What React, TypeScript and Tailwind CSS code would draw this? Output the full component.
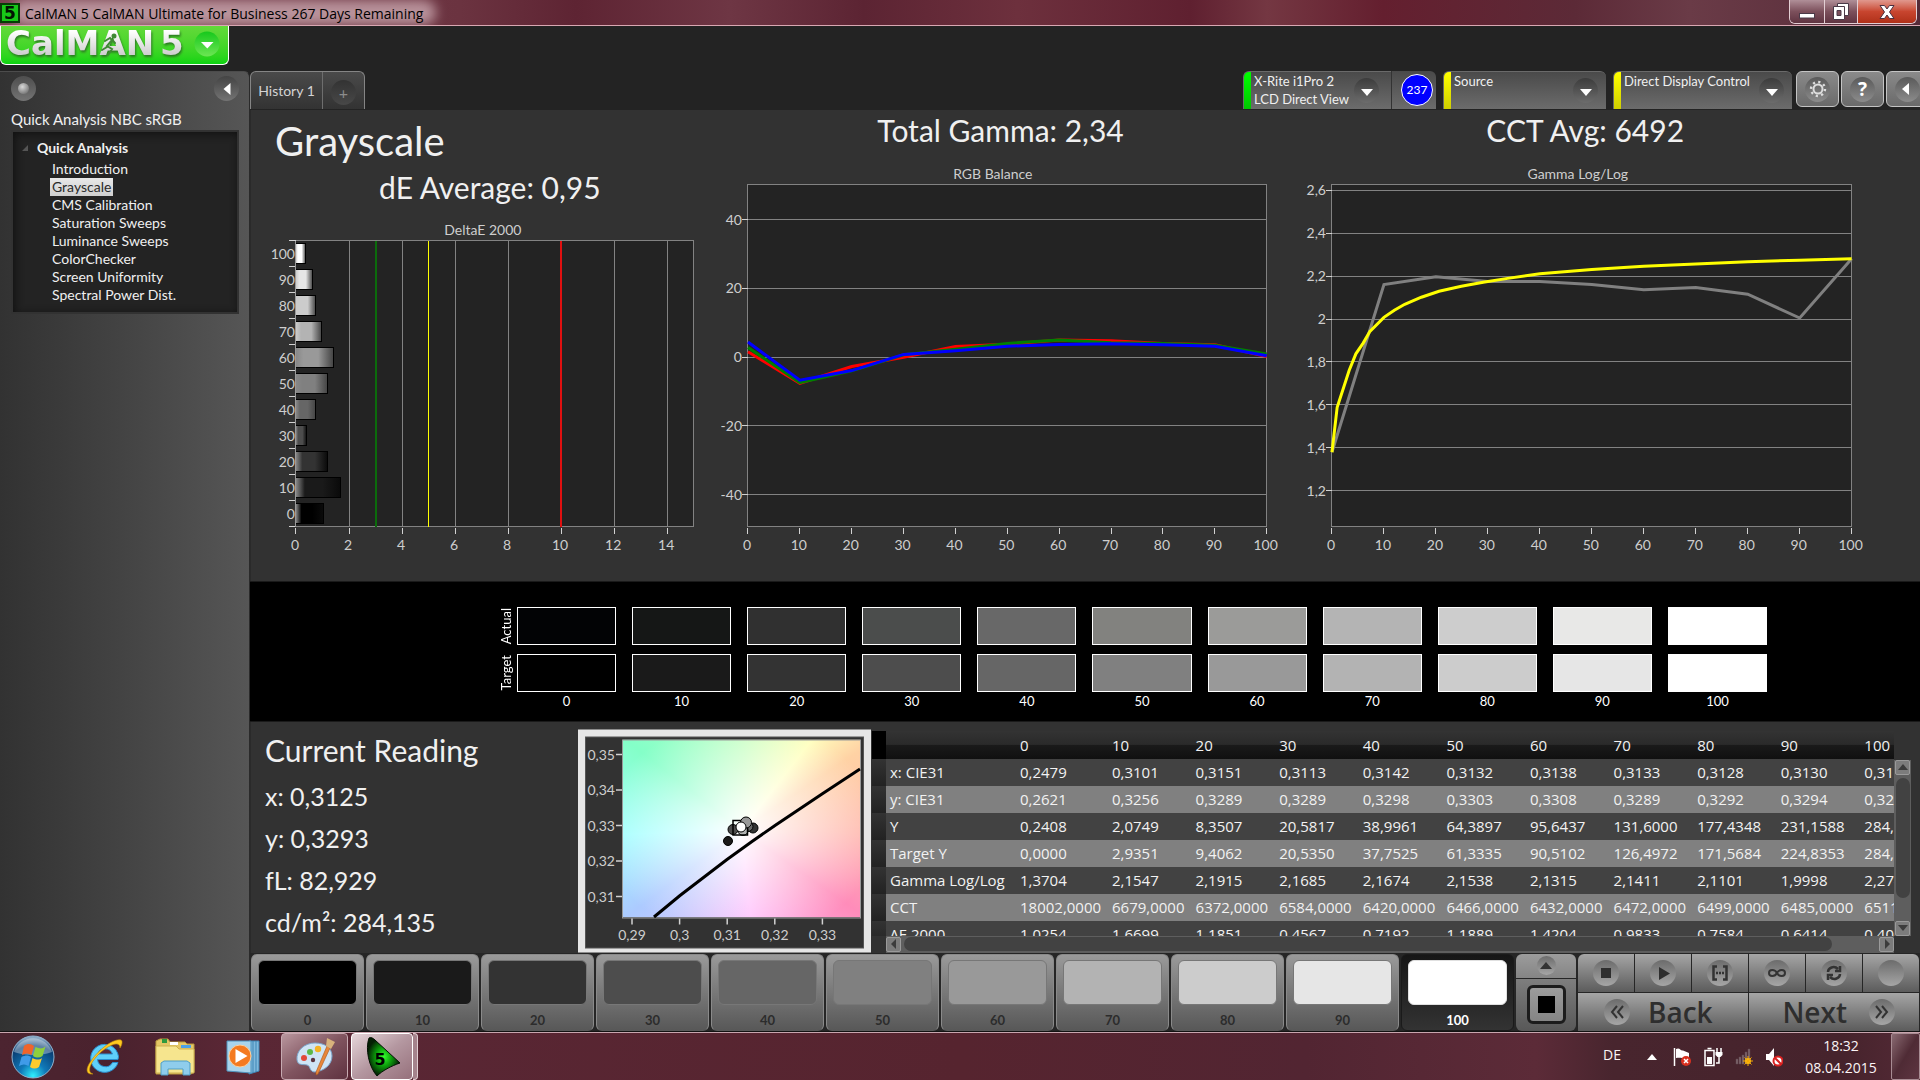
import React from 'react';
import clsx from 'clsx';

const LEVELS = [0, 10, 20, 30, 40, 50, 60, 70, 80, 90, 100];

const MENU = [
  'Introduction',
  'Grayscale',
  'CMS Calibration',
  'Saturation Sweeps',
  'Luminance Sweeps',
  'ColorChecker',
  'Screen Uniformity',
  'Spectral Power Dist.',
];

const TARGET = [
  '#000000',
  '#1a1a1a',
  '#333333',
  '#4d4d4d',
  '#666666',
  '#808080',
  '#999999',
  '#b3b3b3',
  '#cccccc',
  '#e6e6e6',
  '#ffffff',
];

const ACTUAL = [
  '#020305',
  '#151716',
  '#303030',
  '#4b4d4c',
  '#686868',
  '#82827f',
  '#9b9b99',
  '#b4b4b4',
  '#cdcdcd',
  '#e8e8e7',
  '#ffffff',
];

const DELTA_E = [
  1.0254, 1.6699, 1.1851, 0.4067, 0.7392, 1.1889, 1.4004, 0.9633, 0.7384,
  0.6214, 0.36,
];

const RGB_BALANCE = [
  { color: '#ff0000', values: [1.6, -7.6, -2.7, 0, 3.1, 3.8, 5, 4.8, 4, 3.6, 0.2] },
  { color: '#008000', values: [2.8, -7.4, -4, 0.7, 2.3, 4, 5, 4.2, 4, 3.5, 0.9] },
  { color: '#0000ff', values: [4.4, -6.7, -3.9, 0.8, 1.9, 3.2, 3.7, 3.9, 3.6, 3.2, 0.4] },
];

const GAMMA = [1.38, 2.161, 2.198, 2.175, 2.175, 2.161, 2.137, 2.147, 2.116, 2.005, 2.281];

const GAMMA_TARGET = [
  [0, 1.379],
  [1, 1.589],
  [3.3, 1.76],
  [4.6, 1.838],
  [6, 1.888],
  [7.3, 1.943],
  [10, 2.008],
  [12, 2.041],
  [14, 2.069],
  [17.2, 2.102],
  [20.6, 2.13],
  [24.9, 2.153],
  [29.1, 2.172],
  [33.8, 2.19],
  [40, 2.211],
  [50, 2.231],
  [60, 2.246],
  [70, 2.257],
  [80, 2.267],
  [90, 2.275],
  [100, 2.281],
];

const TABLE = [
  { label: 'x: CIE31', cells: ['0,2479', '0,3101', '0,3151', '0,3113', '0,3142', '0,3132', '0,3138', '0,3133', '0,3128', '0,3130', '0,3125'] },
  { label: 'y: CIE31', cells: ['0,2621', '0,3256', '0,3289', '0,3289', '0,3298', '0,3303', '0,3308', '0,3289', '0,3292', '0,3294', '0,3293'] },
  { label: 'Y', cells: ['0,2408', '2,0749', '8,3507', '20,5817', '38,9961', '64,3897', '95,6437', '131,6000', '177,4348', '231,1588', '284,1350'] },
  { label: 'Target Y', cells: ['0,0000', '2,9351', '9,4062', '20,5350', '37,7525', '61,3335', '90,5102', '126,4972', '171,5684', '224,8353', '284,1350'] },
  { label: 'Gamma Log/Log', cells: ['1,3704', '2,1547', '2,1915', '2,1685', '2,1674', '2,1538', '2,1315', '2,1411', '2,1101', '1,9998', '2,2740'] },
  { label: 'CCT', cells: ['18002,0000', '6679,0000', '6372,0000', '6584,0000', '6420,0000', '6466,0000', '6432,0000', '6472,0000', '6499,0000', '6485,0000', '6511,0000'] },
  { label: 'ΔE 2000', cells: ['1,0254', '1,6699', '1,1851', '0,4567', '0,7192', '1,1889', '1,4204', '0,9833', '0,7584', '0,6414', '0,4000'] },
];

/* ---------- window chrome ---------- */

const TitleBar = () => (
  <header className="relative flex h-[26px] items-start overflow-hidden border-b border-[#d9a7b2] bg-[linear-gradient(90deg,#7a4350_0%,#6b3340_24%,#5e2433_30%,#6e3644_38%,#5c2433_45%,#6d303d_53%,#5f2030_62%,#743742_66%,#641f2f_72%,#5c2a37_82%,#6a3b47_88%,#542a37_100%)]">
    <div className="absolute inset-y-0 left-3 w-[424px] rounded-full bg-[#d8b9c0]/70 blur-[6px]" />
    <svg className="relative mt-[3px] h-5 w-5 shrink-0" viewBox="0 0 20 20">
      <rect width="20" height="20" fill="#063d06" />
      <rect x="2" y="2" width="16" height="16" fill="#18c818" />
      <text x="10" y="16" textAnchor="middle" fontSize="17" fontWeight="bold" fill="#021402" fontFamily="DejaVu Sans, sans-serif">
        5
      </text>
    </svg>
    <h1 className="relative ml-[5px] flex-1 font-['Open_Sans',sans-serif] text-[14px] leading-[27px] text-black">
      CalMAN 5 CalMAN Ultimate for Business 267 Days Remaining
    </h1>
    <div className="relative mr-[3px] flex h-6 overflow-hidden rounded-b-md border border-t-0 border-[#e3cfd4]">
      <button
        aria-label="Minimize"
        className="flex w-[35px] items-center justify-center border-r border-[#e3cfd4] bg-linear-to-b from-[#b08f98] via-[#7c505c] to-[#5f3441]"
      >
        <svg className="h-5 w-5" viewBox="0 0 20 20">
          <rect x="2.500" y="11.500" width="15" height="4.500" fill="#fff" stroke="#4a3a48" />
        </svg>
      </button>
      <button
        aria-label="Restore"
        className="flex w-[33px] items-center justify-center border-r border-[#e3cfd4] bg-linear-to-b from-[#b08f98] via-[#7c505c] to-[#5f3441]"
      >
        <svg className="h-5 w-5" viewBox="0 0 20 20" fill="#fff" stroke="#4a3a48">
          <path d="M6.500 1.500h11v12h-11z" />
          <path d="M2.500 4.500h11v13h-11z" />
          <path d="M6 8.500h4v5H6z" fill="#7c505c" />
        </svg>
      </button>
      <button
        aria-label="Close"
        className="flex w-[58px] items-center justify-center bg-linear-to-b from-[#e0988e] via-[#c8452f] to-[#b03018]"
      >
        <svg className="h-5 w-5" viewBox="0 0 20 20">
          <path d="M3 3.500h4.500l2.500 3.500 2.500-3.500H17L12.500 10l4.500 6.500h-4.500L10 13l-2.500 3.500H3L7.500 10z" fill="#fff" stroke="#4a3040" />
        </svg>
      </button>
    </div>
  </header>
);

const Logo = () => (
  <button
    aria-label="CalMAN menu"
    className="block h-[39px] w-[229px] rounded-b-md border border-t-0 border-white bg-linear-to-b from-[#63d93a] to-[#0ad412]"
  >
    <svg className="h-[38px] w-[227px] overflow-visible" viewBox="1 0 227 38">
      <defs>
        <linearGradient id="silver" x1="0" y1="0" x2="0" y2="1">
          <stop offset="0.2" stopColor="#ffffff" />
          <stop offset="1" stopColor="#bdbdbd" />
        </linearGradient>
        <linearGradient id="knob" x1="0" y1="0" x2="0" y2="1">
          <stop offset="0" stopColor="#16c81c" />
          <stop offset="1" stopColor="#6ce653" />
        </linearGradient>
      </defs>
      <g fontFamily="DejaVu Sans, sans-serif" fontWeight="bold" fontSize="34" className="drop-shadow-[1px_2px_1px_#2c7a22]">
        <text x="6" y="29" fill="url(#silver)">CalMAN</text>
        <text x="160" y="29" fill="url(#silver)">5</text>
      </g>
      <g stroke="#3f8a34" fill="none" strokeWidth="2" strokeLinecap="round">
        <path d="M112 14l-5 6 5 3-4 6M105 15l5-3 5 5M107 21l-5 3" />
        <circle cx="114" cy="10" r="1.500" fill="#3f8a34" />
      </g>
      <circle cx="207" cy="18" r="12.500" fill="url(#knob)" />
      <path d="M201 16h12.500l-6.200 6.500z" fill="#fff" />
    </svg>
  </button>
);

/* ---------- sidebar ---------- */

const Sidebar = () => (
  <aside className="w-[250px] shrink-0 rounded-tr-md border-t border-r border-t-[#4c4c4c] border-r-[#2a2a2a] bg-linear-to-r from-[#323232] to-[#565656] pr-[10px] pl-[11px]">
    <div className="flex items-center justify-between pt-1">
      <button aria-label="Record" className="h-[25px] w-[25px] rounded-full bg-linear-to-b from-[#4e4e4e] to-[#747474] p-[7px]">
        <span className="block h-[11px] w-[11px] rounded-full bg-[radial-gradient(circle_at_40%_35%,#d8d8d8,#7a7a7a_75%)]" />
      </button>
      <button aria-label="Collapse" className="flex h-[25px] w-[25px] items-center justify-center rounded-full bg-linear-to-b from-[#444] to-[#747474]">
        <svg className="h-3 w-2" viewBox="0 0 8 12">
          <path d="M7.500 0v12L.5 6z" fill="#fff" />
        </svg>
      </button>
    </div>
    <h2 className="mt-2 mb-px text-[15px] leading-[20px] text-[#f0f0f0]">Quick Analysis NBC sRGB</h2>
    <nav className="h-[184px] border-2 border-[#323232] bg-[#232323] pt-[6px] shadow-[inset_2px_2px_8px_#111]">
      <p className="flex items-center gap-2 pl-2 text-[14px] leading-[20px] font-bold text-[#f0f0f0]">
        <svg className="h-2 w-2" viewBox="0 0 8 8">
          <path d="M7 1v6H1z" fill="#555" />
        </svg>
        Quick Analysis
      </p>
      <ul className="pt-[2px] pl-[37px]">
        {MENU.map((item) => (
          <li key={item} className="flex">
            <a
              href="#"
              className={clsx(
                'px-[2px] text-[14px] leading-[18px]',
                item === 'Grayscale' ? 'bg-linear-to-b from-[#e8e8e8] to-[#cfcfcf] text-[#2a2a2a]' : 'text-[#f0f0f0]'
              )}
            >
              {item}
            </a>
          </li>
        ))}
      </ul>
    </nav>
  </aside>
);

/* ---------- top toolbar ---------- */

const DropKnob = () => (
  <span className="mt-[6px] flex h-[25px] w-[25px] shrink-0 items-center justify-center rounded-full bg-linear-to-b from-[#3c3c3c] to-[#6c6c6c]">
    <svg className="mt-1 h-[7px] w-3" viewBox="0 0 12 7">
      <path d="M0 0h12L6 7z" fill="#fff" />
    </svg>
  </span>
);

interface DeviceProps {
  label: string;
  sub?: string;
  bar: string;
  className: string;
}

const Device: React.FC<DeviceProps> = ({ label, sub, bar, className }) => (
  <button
    className={clsx(
      'flex h-[38px] items-start overflow-hidden rounded-t-md border-t border-l border-[#6a6a6a] bg-linear-to-b from-[#4a4a4a] to-[#6c6c6c] text-left',
      className
    )}
  >
    <span className={clsx('mr-[3px] w-[7px] self-stretch bg-linear-to-b', bar)} />
    <span className="flex-1 text-[13px] leading-[18px] whitespace-nowrap text-[#f0f0f0]">
      {label}
      {sub && (
        <>
          <br />
          {sub}
        </>
      )}
    </span>
    <DropKnob />
  </button>
);

const ToolButton = ({ label, children }: { label: string; children: React.ReactNode }) => (
  <button
    aria-label={label}
    className="flex h-[36px] w-[43px] shrink-0 items-center justify-center rounded-md border border-[#c4c4c4] bg-linear-to-b from-[#8a8a8a] to-[#6a6a6a]"
  >
    <span className="flex h-[25px] w-[25px] items-center justify-center rounded-full bg-linear-to-b from-[#5a5a5a] to-[#8c8c8c]">
      {children}
    </span>
  </button>
);

const Toolbar = () => (
  <div className="flex h-[39px] items-start justify-between overflow-hidden bg-[#232323]">
    <div className="flex h-[38px] rounded-t-md border border-b-0 border-[#858585] bg-linear-to-b from-[#4a4a4a] to-[#333]">
      <button className="w-[72px] border-r border-[#6e6e6e] text-[14px] text-[#d4d4d4]">History 1</button>
      <button aria-label="Add history" className="flex w-[41px] items-center justify-center">
        <span className="mt-[3px] h-[25px] w-[25px] rounded-full bg-linear-to-b from-[#333] to-[#484848] text-[16px] leading-[25px] text-[#8c8c8c]">
          +
        </span>
      </button>
    </div>
    <div className="-mr-[9px] flex">
      <Device label="X-Rite i1Pro 2" sub="LCD Direct View" bar="from-[#00ff00] to-[#00c800]" className="w-[148px] rounded-tr-none pr-3" />
      <div className="flex h-[38px] w-[45px] items-center justify-end rounded-tr-md border-l border-[#333] bg-linear-to-b from-[#4a4a4a] to-[#6c6c6c] pr-[3px]">
        <span className="flex h-8 w-8 items-center justify-center rounded-full border border-white bg-[#0000ff] text-[12px] text-white">
          237
        </span>
      </div>
      <Device label="Source" bar="from-[#ffff00] to-[#d0d000]" className="ml-[7px] w-[163px] pr-2" />
      <Device label="Direct Display Control" bar="from-[#ffff00] to-[#d0d000]" className="mr-1 ml-[7px] w-[179px] pr-2" />
      <div className="flex gap-[2px]">
        <ToolButton label="Settings">
          <svg className="h-[18px] w-[18px]" viewBox="0 0 18 18" fill="none" stroke="#ddd">
            <circle cx="9" cy="9" r="4.500" strokeWidth="2" />
            <circle cx="9" cy="9" r="7" strokeWidth="2.400" strokeDasharray="2.200 3.298" />
          </svg>
        </ToolButton>
        <ToolButton label="Help">
          <span className="font-['Open_Sans',sans-serif] text-[19px] leading-[25px] font-bold text-white">?</span>
        </ToolButton>
        <ToolButton label="Collapse toolbar">
          <svg className="mr-[5px] h-3 w-[7px]" viewBox="0 0 7 12">
            <path d="M7 0v12L0 6z" fill="#fff" />
          </svg>
        </ToolButton>
      </div>
    </div>
  </div>
);

/* ---------- charts ---------- */

const GRID = '#828282';
const TICK = '#d2d2d2';

const ChartText = ({ x, y, anchor = 'middle', children }: { x: number; y: number; anchor?: 'middle' | 'end'; children: React.ReactNode }) => (
  <text x={x} y={y} textAnchor={anchor} fontSize="14" fill="#cecece">
    {children}
  </text>
);

const DeltaEChart = () => {
  const left = 45;
  const top = 35;
  const width = 398;
  const height = 286;
  const step = height / LEVELS.length;
  const px = (v: number) => left + (v / 15) * width;

  return (
    <svg className="block w-full" viewBox="0 0 470 375">
      <defs>
        {TARGET.map((c, i) => (
          <linearGradient key={i} id={`bar${i}`}>
            <stop offset="0" stopColor={i > 6 ? '#ccc' : '#888'} />
            <stop offset="0.2" stopColor={c} />
            <stop offset="0.6" stopColor={c} />
            <stop offset="1" stopColor={i > 3 ? '#444' : '#0a0a0a'} />
          </linearGradient>
        ))}
      </defs>
      <ChartText x={232} y={29}>DeltaE 2000</ChartText>
      <g shapeRendering="crispEdges">
        <rect x={left} y={top} width={width} height={height} fill="#232323" stroke={GRID} />
        {[2, 4, 6, 8, 10, 12, 14].map((v) => (
          <path key={v} d={`M${px(v)} ${top}v${height}`} stroke={GRID} />
        ))}
        {[0, 2, 4, 6, 8, 10, 12, 14].map((v) => (
          <path key={v} d={`M${px(v)} ${top + height + 1}v6`} stroke={TICK} />
        ))}
        <path d={`M${px(3)} ${top}v${height}`} stroke="#0b6b0b" strokeWidth="2" />
        <path d={`M${px(5)} ${top}v${height}`} stroke="#ffff00" />
        <path d={`M${px(10)} ${top}v${height}`} stroke="#e01010" strokeWidth="2" />
        {[...LEVELS, 110].map((_, i) => (
          <path key={i} d={`M${left - 7} ${top + i * step}h7`} stroke={TICK} />
        ))}
        {DELTA_E.map((v, i) => (
          <rect
            key={i}
            x={left}
            y={top + (10 - i) * step + 3}
            width={px(v) - left}
            height={20}
            fill={`url(#bar${i})`}
            stroke="#000"
          />
        ))}
        <path d={`M${left} ${top}v${height}`} stroke="#9a9a9a" />
      </g>
      {LEVELS.map((level, i) => (
        <ChartText key={level} x={left - 1} y={top + (10 - i) * step + 18} anchor="end">{level}</ChartText>
      ))}
      {[0, 2, 4, 6, 8, 10, 12, 14].map((v) => (
        <ChartText key={v} x={px(v) - 1} y={344}>{v}</ChartText>
      ))}
    </svg>
  );
};

interface LineChartProps {
  title: string;
  titleX: number;
  viewWidth: number;
  left: number;
  width: number;
  ticks: number[];
  y: (v: number) => number;
  children: React.ReactNode;
}

const LineChart: React.FC<LineChartProps> = ({ title, titleX, viewWidth, left, width, ticks, y, children }) => {
  const top = 37;
  const height = 342;

  return (
    <svg className="block w-full" viewBox={`0 0 ${viewWidth} 433`}>
      <ChartText x={titleX} y={31}>{title}</ChartText>
      <g shapeRendering="crispEdges">
        <rect x={left} y={top} width={width} height={height} fill="#232323" stroke={GRID} />
        {ticks.map((v) => (
          <g key={v}>
            <path d={`M${left} ${y(v)}h${width}`} stroke={GRID} />
            <path d={`M${left - 6} ${y(v)}h6`} stroke={TICK} />
          </g>
        ))}
        {LEVELS.map((v) => (
          <path key={v} d={`M${left + (v / 100) * width} ${top + height + 1}v6`} stroke={TICK} />
        ))}
      </g>
      {ticks.map((v) => (
        <ChartText key={v} x={left - 6} y={y(v) + 5} anchor="end">{String(v).replace('.', ',')}</ChartText>
      ))}
      {LEVELS.map((v) => (
        <ChartText key={v} x={left + (v / 100) * width - 1} y={402}>{v}</ChartText>
      ))}
      {children}
    </svg>
  );
};

const RgbBalanceChart = () => {
  const y = (v: number) => 209.300 - v * 3.437;
  return (
    <LineChart title="RGB Balance" titleX={272} viewWidth={570} left={27} width={519} ticks={[40, 20, 0, -20, -40]} y={y}>
      {RGB_BALANCE.map((s) => (
        <polyline
          key={s.color}
          fill="none"
          stroke={s.color}
          strokeWidth="3"
          points={s.values.map((v, i) => `${27 + i * 51.9},${y(v)}`).join(' ')}
        />
      ))}
    </LineChart>
  );
};

const GammaChart = () => {
  const y = (v: number) => 42.5 + (2.6 - v) * 214.5;
  return (
    <LineChart
      title="Gamma Log/Log"
      titleX={288}
      viewWidth={630}
      left={42}
      width={520}
      ticks={[2.6, 2.4, 2.2, 2, 1.8, 1.6, 1.4, 1.2]}
      y={y}
    >
      <polyline fill="none" stroke="#808080" strokeWidth="3" points={GAMMA.map((v, i) => `${42 + i * 52},${y(v)}`).join(' ')} />
      <polyline fill="none" stroke="#ffff00" strokeWidth="3" points={GAMMA_TARGET.map(([l, v]) => `${42 + l * 5.2},${y(v)}`).join(' ')} />
    </LineChart>
  );
};

const Charts = () => (
  <section className="grid grid-cols-[470fr_570fr_630fr] border-l border-[#2a2a2a] bg-[#323232] text-[#f0f0f0]">
    <div className="pt-[9px]">
      <h2 className="pl-[24px] text-[40px] leading-[44px]">Grayscale</h2>
      <p className="mt-[6px] mb-px pl-2 text-center text-[30px] leading-[36px]">dE Average: 0,95</p>
      <DeltaEChart />
    </div>
    <div className="pt-[2px]">
      <p className="pr-[10px] text-center text-[30px] leading-[36px]">Total Gamma: 2,34</p>
      <RgbBalanceChart />
    </div>
    <div className="pt-[2px]">
      <p className="pr-[40px] text-center text-[30px] leading-[36px]">CCT Avg: 6492</p>
      <GammaChart />
    </div>
  </section>
);

/* ---------- swatches ---------- */

const SwatchRow = ({ label, colors }: { label: string; colors: string[] }) => (
  <div className="flex h-[38px]">
    <div className="flex w-[18px] items-center justify-start">
      <span className="rotate-180 text-[13px] leading-[14px] text-white [writing-mode:vertical-rl]">{label}</span>
    </div>
    <div className="grid flex-1 grid-cols-11 gap-4">
      {colors.map((c, i) => (
        <div key={i} className="border border-white" style={{ backgroundColor: c }} />
      ))}
    </div>
  </div>
);

const Swatches = () => (
  <section className="flex h-[141px] flex-col border-t border-b border-[#1a1a1a] bg-black pt-[25px] pr-[153px] pl-[249px]">
    <SwatchRow label="Actual" colors={ACTUAL} />
    <div className="h-[9px]" />
    <SwatchRow label="Target" colors={TARGET} />
    <div className="grid grid-cols-11 gap-4 pl-[18px] text-center text-[13px] leading-[18px] text-white">
      {LEVELS.map((l) => (
        <span key={l}>{l}</span>
      ))}
    </div>
  </section>
);

/* ---------- readings, CIE plot and table ---------- */

const CieChart = () => (
  <svg className="block w-[293px] shrink-0" viewBox="0 0 293 223">
    <rect width="293" height="223" fill="#e6e6e6" />
    <rect x="7.500" y="7.500" width="278" height="211" fill="#323232" stroke="#555" />
    <foreignObject x="45" y="10" width="237" height="178">
      <div className="h-full w-full bg-[radial-gradient(ellipse_140px_110px_at_50%_51%,#ffffff_0%,#ffffffcc_20%,#ffffff66_60%,#ffffff00_100%),conic-gradient(from_0deg_at_50%_51%,#c6ffc4_0deg,#ffffbe_38deg,#ffd2a4_56deg,#ffb8ac_90deg,#ff8cba_125deg,#ffbefc_174deg,#accaff_233deg,#a0ffff_268deg,#84ffc8_308deg,#c6ffc4_360deg)]" />
    </foreignObject>
    <rect x="44.500" y="10.500" width="238" height="178" fill="none" stroke="#999" />
    {[0.35, 0.34, 0.33, 0.32, 0.31].map((v, i) => (
      <g key={v}>
        <path d={`M38 ${25 + i * 35.5}h6`} stroke={TICK} strokeWidth="1.500" />
        <ChartText x={37} y={30 + i * 35.5} anchor="end">{String(v).replace('.', ',')}</ChartText>
      </g>
    ))}
    {[0.29, 0.3, 0.31, 0.32, 0.33].map((v, i) => (
      <g key={v}>
        <path d={`M${54 + i * 47.6} 189v6`} stroke={TICK} strokeWidth="1.500" />
        <ChartText x={54 + i * 47.6} y={210}>{String(v).replace('.', ',')}</ChartText>
      </g>
    ))}
    <path d="M76 187.500L102 166L149 130L174 112L197 96L244 64.500L282 39.500" fill="none" stroke="#000" strokeWidth="3" />
    <g stroke="#000">
      <circle cx="150" cy="111.500" r="4.500" fill="#1a1a1a" />
      <circle cx="175" cy="98.500" r="5" fill="#333" />
      <circle cx="155" cy="100" r="5" fill="#4d4d4d" />
      <circle cx="170" cy="97" r="5" fill="#666" />
      <circle cx="165" cy="101" r="5" fill="#b3b3b3" />
      <rect x="155" y="91" width="14.500" height="14.500" fill="none" strokeWidth="1.500" />
      <circle cx="168" cy="93" r="5.500" fill="#999" />
      <circle cx="163" cy="97.500" r="5" fill="#fff" />
    </g>
  </svg>
);

const ScrollButton = ({ label, path }: { label: string; path: string }) => (
  <button aria-label={label} className="flex h-[15px] w-[15px] items-center justify-center rounded-xs border border-[#9a9a9a] bg-[#7c7c7c]">
    <svg className="h-[10px] w-[10px]" viewBox="0 0 10 10">
      <path d={path} fill="#3c3c3c" />
    </svg>
  </button>
);

const DataTable = () => (
  <div className="grid min-w-0 flex-1 grid-cols-[minmax(0,1fr)_17px] grid-rows-[205px_17px] pt-[2px] pr-[9px] pl-px">
    <div className="overflow-hidden">
      <table className="w-[1072px] table-fixed border-collapse text-left font-['Open_Sans',sans-serif] text-[15px] leading-[20px] text-[#f2f2f2]">
        <colgroup>
          <col className="w-[14px]" />
          <col className="w-[130px]" />
          <col className="w-[92px]" />
          {LEVELS.slice(1).map((l) => (
            <col key={l} />
          ))}
        </colgroup>
        <thead>
          <tr className="h-7 bg-[linear-gradient(#333_0%,#2a2a2a_48%,#1a1a1a_50%,#101010_100%)]">
            <th className="bg-black p-0" />
            <th className="p-0" />
            {LEVELS.map((l) => (
              <th key={l} className="p-0 pl-1 font-normal">{l}</th>
            ))}
          </tr>
        </thead>
        <tbody>
          {TABLE.map((row, i) => (
            <tr key={row.label} className={clsx('h-[27px]', i % 2 ? 'bg-[#808080]' : 'bg-[#424242]')}>
              <td className="bg-linear-to-b from-[#333] to-[#222] p-0" />
              <th className="p-0 pl-1 font-normal whitespace-nowrap">{row.label}</th>
              {row.cells.map((cell, j) => (
                <td key={j} className="p-0 pl-1 whitespace-nowrap">{cell}</td>
              ))}
            </tr>
          ))}
        </tbody>
      </table>
    </div>
    <div className="mt-[29px] flex flex-col items-center justify-between bg-[#5e5e5e]">
      <ScrollButton label="Scroll up" path="M0 8h10L5 2z" />
      <div className="mt-[3px] mb-auto h-[120px] w-[14px] rounded-full bg-[#424242]" />
      <ScrollButton label="Scroll down" path="M0 2h10L5 8z" />
    </div>
    <div className="ml-[14px] flex items-center bg-[#5e5e5e]">
      <ScrollButton label="Scroll left" path="M7 0v10L2 5z" />
      <div className="mr-[47px] ml-[3px] h-[14px] flex-1 rounded-full bg-[#424242]" />
      <ScrollButton label="Scroll right" path="M3 0v10l5-5z" />
    </div>
  </div>
);

const Readings = () => (
  <section className="flex h-[231px] border-l border-[#2a2a2a] bg-[#323232] pt-[7px] text-[#f0f0f0]">
    <div className="w-[327px] shrink-0 pt-[3px] pl-[14px]">
      <h3 className="mb-[7px] text-[30px] leading-[36px]">Current Reading</h3>
      {['x: 0,3125', 'y: 0,3293', 'fL: 82,929', 'cd/m²: 284,135'].map((t) => (
        <p key={t} className="text-[25px] leading-[42px]">{t}</p>
      ))}
    </div>
    <CieChart />
    <DataTable />
  </section>
);

/* ---------- bottom bar ---------- */

const IconKnob = ({ children }: { children?: React.ReactNode }) => (
  <span className="flex h-[26px] w-[26px] items-center justify-center rounded-full bg-linear-to-b from-[#6c6c6c] to-[#a6a6a6]">
    <svg className="h-[18px] w-[18px]" viewBox="0 0 18 18" fill="none" stroke="#333" strokeWidth="2">
      {children}
    </svg>
  </span>
);

const TRANSPORT = [
  { label: 'Stop', icon: <path d="M4 4h10v10H4z" fill="#2e2e2e" stroke="none" /> },
  { label: 'Play', icon: <path d="M5 3v13l11-6.500z" fill="#2e2e2e" stroke="none" /> },
  { label: 'Read series', icon: <path d="M6 2.500H2.500v13H6M12 2.500h3.500v13H12M5 9h2M8 9h2M11 9h2" strokeWidth="2.500" /> },
  { label: 'Continuous', icon: <path d="M9 9C7 5 1 5 1 9s6 4 8 0 8-4 8 0-6 4-8 0z" /> },
  { label: 'Refresh', icon: <path d="M3 8c0-4 6-7 10-3M15 2v5h-5M15 10c0 4-6 7-10 3M3 16v-5h5" strokeWidth="2.500" /> },
  { label: 'Blank', icon: null },
];

const BottomBar = () => (
  <footer className="flex h-[79px] gap-[2px] bg-[#262626] px-px pt-px pb-px">
    {LEVELS.map((l, i) => (
      <button
        key={l}
        className={clsx(
          'flex flex-1 flex-col rounded-md border px-[6px] pt-[5px]',
          l === 100
            ? 'border-[#1a1a1a] bg-linear-to-b from-[#161616] to-[#333]'
            : 'border-[#8a8a8a] border-b-[#5a5a5a] bg-linear-to-b from-[#9a9a9a] to-[#585858]'
        )}
      >
        <span
          className={clsx('h-[45px] w-full rounded-md border', l === 100 ? 'border-[#e0e0e0]' : 'border-[#777]')}
          style={{ backgroundColor: TARGET[i] }}
        />
        <span
          className={clsx('mt-[6px] w-full text-center text-[13px] leading-[18px] font-bold', l === 100 ? 'text-white' : 'text-[#2c2c2c]')}
        >
          {l}
        </span>
      </button>
    ))}
    <div className="flex w-[60px] shrink-0 flex-col gap-px">
      <button aria-label="Expand" className="flex h-6 items-center justify-center rounded-t-md bg-linear-to-b from-[#9c9c9c] to-[#858585]">
        <span className="flex h-[19px] w-[19px] items-center justify-center rounded-full bg-linear-to-b from-[#6c6c6c] to-[#a6a6a6]">
          <svg className="h-[7px] w-3" viewBox="0 0 12 7">
            <path d="M0 7h12L6 0z" fill="#333" />
          </svg>
        </span>
      </button>
      <button aria-label="Pattern window" className="flex flex-1 items-center justify-center rounded-b-md bg-linear-to-b from-[#7e7e7e] to-[#585858]">
        <span className="flex h-[39px] w-[39px] items-center justify-center rounded-md border-3 border-[#1c1c1c] bg-linear-to-b from-[#9c9c9c] to-[#858585]">
          <span className="h-[17px] w-[17px] bg-black" />
        </span>
      </button>
    </div>
    <div className="flex w-[341px] shrink-0 flex-col gap-px">
      <div className="grid flex-1 grid-cols-6 gap-px">
        {TRANSPORT.map((t) => (
          <button key={t.label} aria-label={t.label} className="flex items-center justify-center bg-linear-to-b from-[#a6a6a6] to-[#5c5c5c] first:rounded-tl-md last:rounded-tr-md">
            <IconKnob>{t.icon}</IconKnob>
          </button>
        ))}
      </div>
      <div className="grid flex-1 grid-cols-2 gap-px font-['Open_Sans',sans-serif] text-[28px] leading-[36px] font-semibold text-[#2e2e2e]">
        <button className="flex items-center gap-[18px] bg-linear-to-b from-[#a6a6a6] to-[#5c5c5c] pl-[26px]">
          <IconKnob>
            <path d="M9 3L4 9l5 6M15 3l-5 6 5 6" />
          </IconKnob>
          Back
        </button>
        <button className="flex items-center justify-end gap-[22px] bg-linear-to-b from-[#a6a6a6] to-[#5c5c5c] pr-[24px]">
          Next
          <IconKnob>
            <path d="M9 3l5 6-5 6M3 3l5 6-5 6" />
          </IconKnob>
        </button>
      </div>
    </div>
  </footer>
);

/* ---------- taskbar ---------- */

const StartOrb = () => (
  <svg className="h-11 w-11" viewBox="0 0 44 44">
    <defs>
      <radialGradient id="orb" cx="0.5" cy="0.95" r="0.9">
        <stop offset="0" stopColor="#2ff0ff" />
        <stop offset="0.35" stopColor="#1079b8" />
        <stop offset="0.8" stopColor="#0a3f74" />
        <stop offset="1" stopColor="#86a7c4" />
      </radialGradient>
    </defs>
    <circle cx="22" cy="22" r="21" fill="url(#orb)" stroke="#8fb3cf" />
    <path d="M3 17a20 20 0 0 1 38 0c-9 4-28 4-38 0z" fill="#fff" opacity="0.350" />
    <path d="M13 11c4-3 7-2 10 0l-2.500 9c-3-2-6-2-9.500 0z" fill="#f0642a" />
    <path d="M24.500 12c4 2 7 2 10-.5l-3 9.500c-3 2-6 2-9.500 0z" fill="#8fcf3c" />
    <path d="M10.500 22c4-2 7-2 9.500 0l-2.500 9c-3-2-6-2-9.500 0z" fill="#3f9be8" />
    <path d="M21.500 23c4 2 7 2 9.500 0l-3 9c-3 2-6 2-9 0z" fill="#fccb2e" />
  </svg>
);

const IeIcon = () => (
  <svg className="h-10 w-10" viewBox="0 0 40 40" fill="none">
    <path d="M34 22.500H13.500a8 8 0 0 0 15 3H34a14 14 0 1 1 .5-6z" stroke="#2a8fd0" fill="#5fd0fa" />
    <path d="M13.500 17a8 8 0 0 1 15 0z" fill="#5a2936" stroke="#2a8fd0" />
    <path d="M9 37C2 38 1 32 7 24 15 12 30 1 37 3c2 1 1 5-1 8 0-4-3-5-8-3C18 12 8 23 6 30c-1 4 0 6 3 7z" fill="#ffc91f" stroke="#b8860b" strokeWidth="0.600" />
  </svg>
);

const ExplorerIcon = () => (
  <svg className="h-10 w-10" viewBox="0 0 40 40">
    <path d="M1 4l4-2h8l2 3h15l2 2h7v28l-3 2H1z" fill="#e5c766" stroke="#b99a3e" />
    <path d="M7 2h5v4H7z" fill="#2f9a3e" />
    <path d="M15 5h8v3h-8z" fill="#fff" />
    <path d="M26 8h10v3H26z" fill="#4aa0e8" />
    <path d="M1 9h20l3 3h15v24H1z" fill="#f6e58e" stroke="#cdb050" />
    <path d="M6 26l3-2h23l3 2v12h-7v-6H13v6H6z" fill="#8fcdec" stroke="#4f9ec6" />
  </svg>
);

const PlayerIcon = () => (
  <svg className="h-10 w-10" viewBox="0 0 40 40">
    <path d="M26 4h10v30l-10 3z" fill="#7fb8dc" stroke="#3f86b5" />
    <path d="M30 4v32M33 4v31" stroke="#3f86b5" />
    <path d="M4 4h24v32L4 34z" fill="#a9d4ec" stroke="#4f93bd" />
    <circle cx="17" cy="19" r="11" fill="#f47a20" stroke="#fbd0a0" />
    <path d="M12.500 12v14l12-7z" fill="#fff" />
  </svg>
);

const PaintIcon = () => (
  <svg className="h-10 w-10" viewBox="0 0 40 40">
    <path d="M20 6c10 0 17 5 17 13 0 9-8 15-17 16-6 0-4-6-8-7s-9 1-10-5C1 13 10 6 20 6z" fill="#cfe4f5" stroke="#7ba6cc" />
    <circle cx="9" cy="21" r="3" fill="#e2493b" />
    <circle cx="15" cy="15" r="3" fill="#5cb848" />
    <circle cx="23" cy="12" r="3.200" fill="#f5b324" />
    <circle cx="18" cy="23" r="2.200" fill="#5b3440" />
    <path d="M32 9l3 2-12 26-2 1v-3z" fill="#e8863a" stroke="#a8551b" strokeWidth="0.600" />
    <path d="M32 1l8 4-4 7-5-3z" fill="#d9b27c" />
  </svg>
);

const CalmanIcon = () => (
  <svg className="h-10 w-10" viewBox="0 0 40 40">
    <defs>
      <radialGradient id="glow">
        <stop offset="0" stopColor="#35ff2a" />
        <stop offset="0.5" stopColor="#0b9a0b" />
        <stop offset="1" stopColor="#042004" />
      </radialGradient>
    </defs>
    <path d="M7 1c2-1 4 0 6 2l25 23c-9 3-18 8-23 13C7 30 3 12 7 1z" fill="url(#glow)" stroke="#021002" />
    <text x="18" y="28" textAnchor="middle" fontSize="16" fontWeight="bold" fill="#000" fontFamily="DejaVu Sans, sans-serif">
      5
    </text>
  </svg>
);

const TrayIcons = () => (
  <div className="flex items-center gap-3">
    <svg className="mr-1 h-[6px] w-[10px]" viewBox="0 0 10 6">
      <path d="M0 6h10L5 0z" fill="#fff" />
    </svg>
    <svg className="h-5 w-[18px]" viewBox="0 0 18 20">
      <path d="M1.500 1v18" stroke="#fff" strokeWidth="1.500" />
      <path d="M3 2c4-2 4 2 7 1.500L16 6v6c-4 1-5-2-13-1z" fill="#fff" />
      <circle cx="13" cy="14" r="5" fill="#d9301f" />
      <path d="M11 12l4 4M15 12l-4 4" stroke="#fff" strokeWidth="1.500" />
    </svg>
    <svg className="h-5 w-5" viewBox="0 0 20 20" fill="none" stroke="#fff" strokeWidth="1.500">
      <path d="M2 3.500h9v15H2zM4.500 1.500h4" />
      <path d="M4 10h5v7H4z" fill="#fff" stroke="none" />
      <path d="M14 1v4M18 1v4M16 10v6h-3" />
      <path d="M12.500 5h7v3l-2 2h-3l-2-2z" fill="#fff" stroke="none" />
    </svg>
    <svg className="h-5 w-[18px]" viewBox="0 0 18 20">
      <path d="M1 12h2v5H1zM4 10h2v7H4zM7 8h2v9H7zM10 5h2v12h-2zM13 2h2v15h-2z" fill="#7d666c" stroke="#5c474e" strokeWidth="0.500" />
      <circle cx="13" cy="14" r="3" fill="#ffc21a" />
      <path d="M13 9v10M8 14h10M9.500 10.500l7 7M16.500 10.500l-7 7" stroke="#f5a800" />
    </svg>
    <svg className="h-5 w-[18px]" viewBox="0 0 18 20">
      <path d="M1 7h3l5-6v18l-5-6H1z" fill="#fff" />
      <circle cx="13" cy="14" r="4.500" fill="#fff" stroke="#d9201f" strokeWidth="2" />
      <path d="M10 11l6 6" stroke="#d9201f" strokeWidth="2" />
    </svg>
  </div>
);

const Taskbar = () => (
  <div className="flex h-12 items-stretch justify-between border-t border-[#c9a5ae] bg-[linear-gradient(90deg,#4c2430_0%,#4a222e_6%,#5a2735_12%,#56242f_50%,#522532_68%,#5c2b38_80%,#48252e_84%,#46232c_96%,#542a36_100%)] shadow-[0_-1px_0_#111]">
    <div className="flex items-center">
      <button aria-label="Start" className="ml-[11px]"><StartOrb /></button>
      <button aria-label="Internet Explorer" className="ml-[29px]"><IeIcon /></button>
      <button aria-label="Explorer" className="ml-[31px]"><ExplorerIcon /></button>
      <button aria-label="Media Player" className="ml-[28px]"><PlayerIcon /></button>
      <button
        aria-label="Paint"
        className="ml-[18px] flex h-full w-[67px] items-center justify-center rounded-sm border border-[#c7aab1] bg-linear-to-br from-[#b9979f] via-[#80545f] to-[#5f3240]"
      >
        <PaintIcon />
      </button>
      <button
        aria-label="CalMAN 5"
        className="ml-[3px] flex h-full w-[62px] items-center justify-center rounded-sm border border-white bg-linear-to-br from-[#e6d6da] via-[#b497a0] to-[#96717c]"
      >
        <CalmanIcon />
      </button>
      <span className="h-full w-[5px] rounded-r-sm border border-l-0 border-[#e0ccd1] bg-[#a5838c]" />
    </div>
    <div className="flex items-center text-[#fbf4f5]">
      <span className="mr-[26px] pb-[4px] font-['Open_Sans',sans-serif] text-[14px]">DE</span>
      <TrayIcons />
      <div className="ml-[21px] w-[74px] text-center font-['Open_Sans',sans-serif] text-[14px] leading-[22px]">
        <p>18:32</p>
        <p>08.04.2015</p>
      </div>
      <button
        aria-label="Show desktop"
        className="ml-[13px] h-full w-[29px] rounded-xs border border-[#a88c93] bg-linear-to-br from-[#8a6b73] via-[#4f2b35] to-[#5e3541]"
      />
    </div>
  </div>
);

export default function App() {
  return (
    <div className="flex min-h-screen flex-col overflow-x-hidden bg-[#232323] font-['Lato',sans-serif]">
      <TitleBar />
      <div className="h-[45px]">
        <Logo />
      </div>
      <div className="flex flex-1">
        <Sidebar />
        <main className="min-w-0 flex-1">
          <Toolbar />
          <Charts />
          <Swatches />
          <Readings />
          <BottomBar />
        </main>
      </div>
      <Taskbar />
    </div>
  );
}
